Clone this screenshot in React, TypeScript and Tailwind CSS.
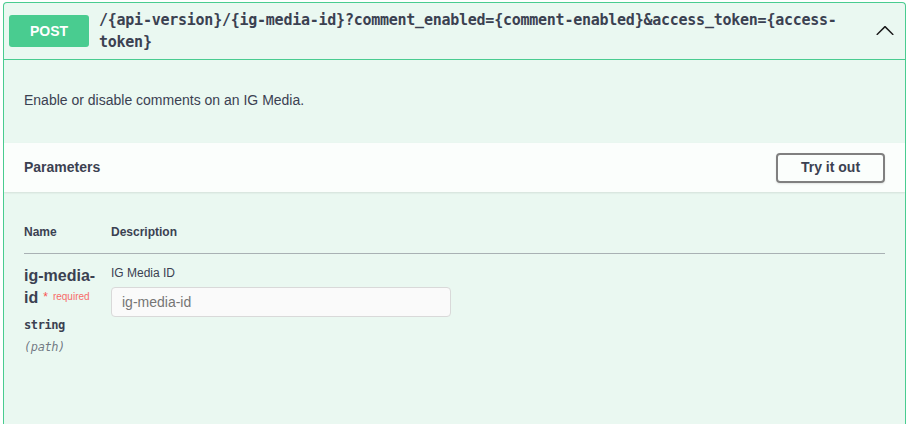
import React from 'react';

const mono = "font-['DejaVu_Sans_Mono','Liberation_Mono',monospace]";
const sans = "font-['Liberation_Sans',Arial,sans-serif]";

function ChevronUp() {
  return (
    <svg width="20" height="20" viewBox="0 0 20 20" className="text-[#1a1a1a]">
      <path
        d="M2.6 13.9c-.27.27-.71.27-.98 0s-.27-.7 0-.97l7.9-7.83c.27-.27.71-.27.98 0l7.9 7.83c.27.27.27.7 0 .97-.27.27-.71.27-.98 0L10 6.75 2.6 13.9z"
        fill="currentColor"
      />
    </svg>
  );
}

export default function App() {
  return (
    <div className={`min-h-screen bg-white pl-[3px] pr-[5px] pt-[2px] text-[#3b4151] ${sans}`}>
      <div className="h-[422px] rounded-t-[4px] border border-b-0 border-[#49cc90] bg-[#eaf8f1] overflow-hidden">
        {/* summary */}
        <div className="flex h-[57px] items-center border-b border-[#49cc90] px-[5px]">
          <span className="flex h-[32px] w-[80px] shrink-0 items-center justify-center rounded-[3px] bg-[#49cc90] text-[14px] font-bold text-white">
            POST
          </span>
          <span
            className={`flex-1 pl-[10px] pr-[10px] text-[15px] font-bold leading-[22px] tracking-[-0.25px] text-[#3b4151] ${mono}`}
          >
            /{'{api-version}'}/{'{ig-media-id}'}?comment_enabled={'{comment-enabled}'}&amp;access_token={'{access-token}'}
          </span>
          <span className="mr-[5px] flex w-[20px] shrink-0 items-center justify-center">
            <ChevronUp />
          </span>
        </div>

        {/* description */}
        <div className="h-[83px] px-[20px] pt-[30px]">
          <p className="text-[14px] leading-[20px]">Enable or disable comments on an IG Media.</p>
        </div>

        {/* parameters header */}
        <div className="flex h-[49px] items-center justify-between bg-white/80 px-[20px] shadow-[0_1px_2px_rgba(0,0,0,0.1)]">
          <h4 className="text-[14px] font-bold">Parameters</h4>
          <button className="h-[30px] w-[109px] rounded-[4px] border-2 border-[#808080] bg-transparent text-[14px] font-bold text-[#3b4151] shadow-[0_1px_2px_rgba(0,0,0,0.1)]">
            Try it out
          </button>
        </div>

        {/* table */}
        <div className="px-[20px] pt-[32px]">
          <div className="flex border-b border-[#a9b1b4] pb-[13px] text-[12px] font-bold leading-[16px]">
            <div className="w-[87px]">Name</div>
            <div>Description</div>
          </div>
          <div className="flex pt-[11px]">
            <div className="w-[87px] shrink-0 pr-[10px]">
              <div className="text-[16px] font-bold leading-[22px]">
                ig-media-id
                <span className="relative -top-[2px] ml-[5px] text-[12px] font-normal text-[#ff0000]/70">*</span>
                <span className="relative -top-[3px] ml-[5px] text-[10px] font-normal text-[#ff0000]/60">required</span>
              </div>
              <div className={`mt-[6px] text-[12px] font-semibold leading-[16px] tracking-[-0.4px] ${mono}`}>string</div>
              <div className={`mt-[6px] text-[12px] italic leading-[16px] tracking-[-0.4px] text-[#3b4151]/70 ${mono}`}>
                (path)
              </div>
            </div>
            <div className="flex-1">
              <div className="text-[12px] leading-[16px]">IG Media ID</div>
              <input
                type="text"
                placeholder="ig-media-id"
                className="mt-[6px] h-[30px] w-[340px] rounded-[4px] border border-[#d9d9d9] bg-[#fafafa] px-[10px] text-[14px] text-[#3b4151] placeholder:text-[#757575] outline-none"
              />
            </div>
          </div>
        </div>
      </div>
    </div>
  );
}
